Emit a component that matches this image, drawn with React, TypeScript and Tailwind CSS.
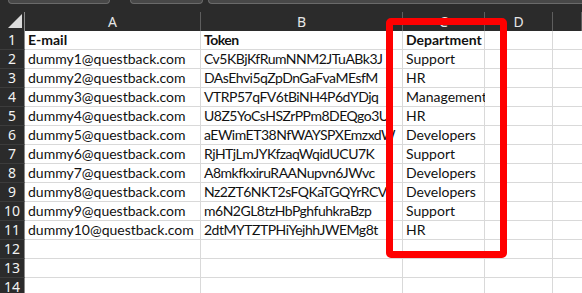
import React from "react"

const rows = [
  ["E-mail", "Token", "Department"],
  ["dummy1@questback.com", "Cv5KBjKfRumNNM2JTuABk3J", "Support"],
  ["dummy2@questback.com", "DAsEhvi5qZpDnGaFvaMEsfM", "HR"],
  ["dummy3@questback.com", "VTRP57qFV6tBiNH4P6dYDjq", "Management"],
  ["dummy4@questback.com", "U8Z5YoCsHSZrPPm8DEQgo3U", "HR"],
  ["dummy5@questback.com", "aEWimET38NfWAYSPXEmzxdW", "Developers"],
  ["dummy6@questback.com", "RjHTjLmJYKfzaqWqidUCU7K", "Support"],
  ["dummy7@questback.com", "A8mkfkxiruRAANupvn6JWvc", "Developers"],
  ["dummy8@questback.com", "Nz2ZT6NKT2sFQKaTGQYrRCV", "Developers"],
  ["dummy9@questback.com", "m6N2GL8tzHbPghfuhkraBzp", "Support"],
  ["dummy10@questback.com", "2dtMYTZTPHiYejhhJWEMg8t", "HR"],
  ["", "", ""],
  ["", "", ""],
  ["", "", ""],
]

const cols = ["A", "B", "C", "D", ""]

const cellExtra = ["overflow-hidden", "overflow-hidden tracking-[-0.5px]", "overflow-visible"]

export default function App() {
  return (
    <div className="relative w-[582px] h-[293px] overflow-hidden bg-[#2b2b2b] font-['Lato',sans-serif]">
      {/* ribbon tabs */}
      <div className="flex h-[4px] items-end">
        <div className="ml-[8px] w-[102px] h-full rounded-b-[5px] border border-t-0 border-[#6a6a6a] bg-[#484848]" />
        <div className="ml-[20px] w-[73px] h-full rounded-b-[5px] border border-t-0 border-[#6a6a6a] bg-[#484848]" />
        <div className="ml-[5px] flex-1 h-full rounded-bl-[5px] border border-t-0 border-r-0 border-[#6a6a6a] bg-[#484848]" />
      </div>

      <div className="mt-[8px] grid grid-cols-[25px_176px_202px_82px_68px_1fr] auto-rows-[19px]">
        {/* corner */}
        <div className="relative border-r border-[#8a8a8a] bg-[#2b2b2b]">
          <svg className="absolute right-[2px] bottom-[3px]" width="14" height="14" viewBox="0 0 14 14">
            <polygon points="14,0 14,14 0,14" fill="#dcdcdc" />
          </svg>
        </div>
        {cols.map((c, i) => (
          <div
            key={i}
            className="flex items-center justify-center border-r border-[#5e5e5e] bg-[#2b2b2b] text-[14px] text-[#e6e6e6] font-['Noto_Sans',sans-serif]"
          >
            {c}
          </div>
        ))}

        {rows.map((r, ri) => (
          <React.Fragment key={ri}>
            <div className="flex items-end justify-center pb-[2px] border-r border-b border-r-[#8a8a8a] border-b-[#3c3c3c] bg-[#2b2b2b] text-[14px] leading-none text-[#f2f2f2] font-['Noto_Sans',sans-serif]">
              {ri + 1}
            </div>
            {r.map((v, ci) => (
              <div
                key={ci}
                className={
                  "flex items-end pb-[2px] pl-[3px] border-r border-b border-[#d9d9d9] bg-white text-[14px] leading-none whitespace-nowrap text-[#111] " +
                  cellExtra[ci] +
                  (ri === 0 ? " font-bold" : "")
                }
              >
                {v}
              </div>
            ))}
            <div className="border-r border-b border-[#d9d9d9] bg-white" />
            <div className="border-b border-[#d9d9d9] bg-white" />
          </React.Fragment>
        ))}
      </div>

      {/* highlight around Department column */}
      <div className="absolute left-[386px] top-[18px] w-[121px] h-[240px] rounded-[5px] border-[7px] border-[#ff0000]" />
    </div>
  )
}
